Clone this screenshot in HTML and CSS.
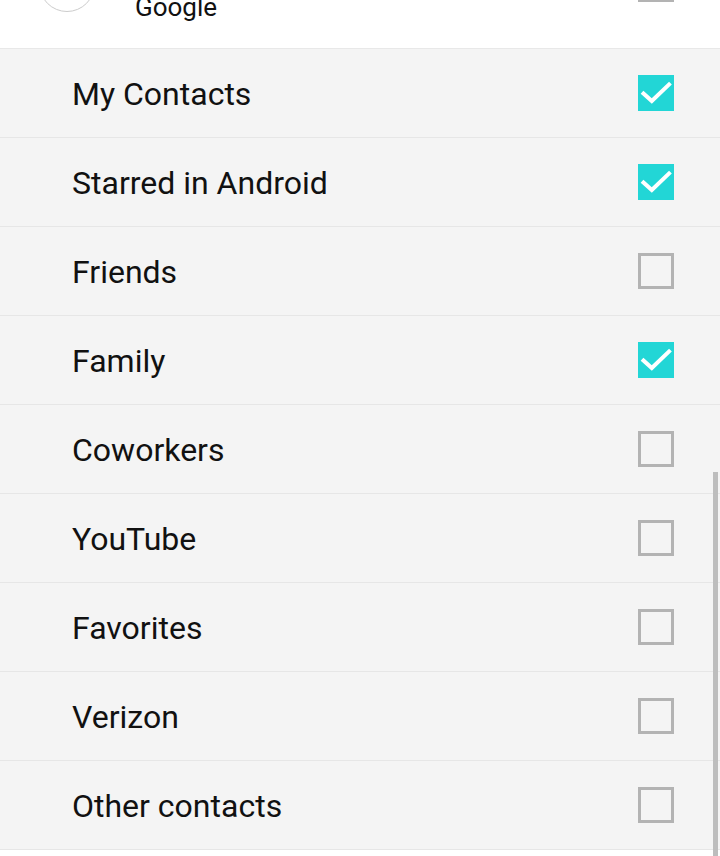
FILE: index.html
```html
<!DOCTYPE html>
<html>
<head>
<meta charset="utf-8">
<link rel="stylesheet" href="styles.css">
</head>
<body>
<div class="page">
  <div class="account">
    <div class="account-inner">
      <div class="avatar"></div>
      <div class="account-text">Google</div>
      <div class="box box-top"></div>
    </div>
  </div>
  <ul class="list">
    <li class="row"><span class="label">My Contacts</span><span class="box checked"><svg viewBox="0 0 36 36"><polyline points="5.5,18.5 13.8,26 31,9.5"/></svg></span></li>
    <li class="row"><span class="label">Starred in Android</span><span class="box checked"><svg viewBox="0 0 36 36"><polyline points="5.5,18.5 13.8,26 31,9.5"/></svg></span></li>
    <li class="row"><span class="label">Friends</span><span class="box"></span></li>
    <li class="row"><span class="label">Family</span><span class="box checked"><svg viewBox="0 0 36 36"><polyline points="5.5,18.5 13.8,26 31,9.5"/></svg></span></li>
    <li class="row"><span class="label">Coworkers</span><span class="box"></span></li>
    <li class="row"><span class="label">YouTube</span><span class="box"></span></li>
    <li class="row"><span class="label">Favorites</span><span class="box"></span></li>
    <li class="row"><span class="label">Verizon</span><span class="box"></span></li>
    <li class="row"><span class="label">Other contacts</span><span class="box"></span></li>
  </ul>
  <div class="scrollbar"></div>
</div>
</body>
</html>
```
FILE: styles.css
```css
html, body {
  margin: 0;
  padding: 0;
  background: #ffffff;
}
body {
  font-family: Roboto, "Noto Sans", sans-serif;
  color: #111111;
}
.page {
  position: relative;
  width: 720px;
  height: 856px;
  overflow: hidden;
  background: #ffffff;
}
.account {
  height: 48px;
  overflow: hidden;
  border-bottom: 1px solid #e8e8e8;
}
.account-inner {
  display: flex;
  align-items: flex-end;
  height: 56px;
  margin-top: -44px;
  padding-left: 39px;
  padding-right: 46px;
}
.avatar {
  width: 56px;
  height: 56px;
  box-sizing: border-box;
  border: 1.5px solid #cccccc;
  border-radius: 50%;
  flex: none;
}
.account-text {
  margin-left: 40px;
  font-size: 26px;
  line-height: 26px;
  margin-bottom: -8px;
  flex: 1;
  color: #111;
}
.box-top {
  align-self: flex-start;
  margin-top: 10px;
}
.list {
  list-style: none;
  margin: 0;
  padding: 0;
}
.row {
  display: flex;
  align-items: center;
  height: 88px;
  padding-left: 72px;
  padding-right: 46px;
  background: #f4f4f4;
  border-bottom: 1px solid #e6e6e6;
}
.label {
  flex: 1;
  font-size: 32px;
  line-height: 36px;
  color: #111111;
  padding-top: 2px;
}
.box {
  display: block;
  width: 36px;
  height: 36px;
  box-sizing: border-box;
  border: 3px solid #b3b3b3;
  flex: none;
}
.box.checked {
  border: none;
  background: #22d6d6;
}
.box svg {
  display: block;
  width: 36px;
  height: 36px;
}
.box polyline {
  fill: none;
  stroke: #ffffff;
  stroke-width: 4;
  stroke-linecap: square;
  stroke-linejoin: miter;
}
.scrollbar {
  position: absolute;
  right: 2px;
  top: 472px;
  width: 5px;
  height: 384px;
  background: #bdbdbd;
}
```
